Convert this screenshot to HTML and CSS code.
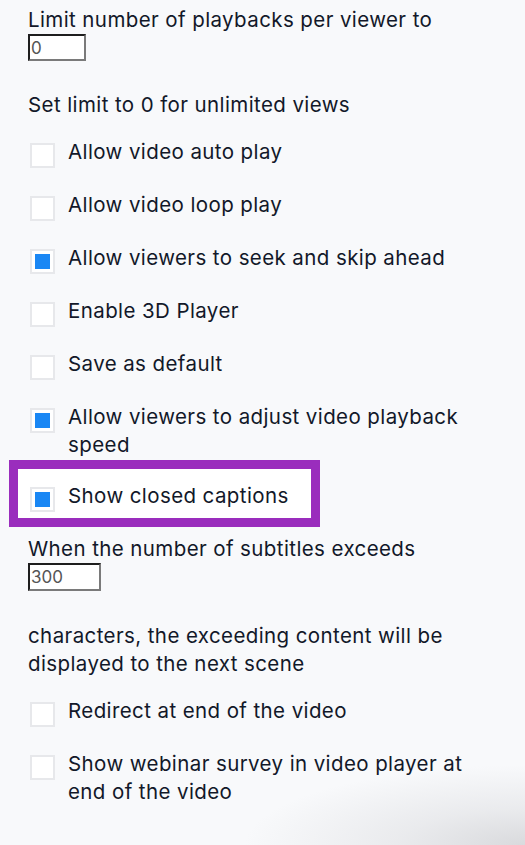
FILE: index.html
```html
<!DOCTYPE html>
<html lang="en">
<head>
  <meta charset="UTF-8">
  <meta name="viewport" content="width=device-width, initial-scale=1.0">
  <title>Player settings</title>
  <link rel="stylesheet" href="styles.css">
</head>
<body>
  <div class="settings">

    <div class="field">
      <label for="limit">Limit number of playbacks per viewer to</label>
      <input type="text" id="limit" class="num small" value="0">
    </div>
    <p class="note">Set limit to 0 for unlimited views</p>

    <div class="options">
      <label class="opt"><input type="checkbox"><span>Allow video auto play</span></label>
      <label class="opt"><input type="checkbox"><span>Allow video loop play</span></label>
      <label class="opt"><input type="checkbox" checked><span>Allow viewers to seek and skip ahead</span></label>
      <label class="opt"><input type="checkbox"><span>Enable 3D Player</span></label>
      <label class="opt"><input type="checkbox"><span>Save as default</span></label>
      <label class="opt"><input type="checkbox" checked><span>Allow viewers to adjust video playback speed</span></label>
      <label class="opt highlight"><input type="checkbox" checked><span>Show closed captions</span></label>
    </div>

    <div class="field after-opts">
      <label for="subs">When the number of subtitles exceeds</label>
      <input type="text" id="subs" class="num wide" value="300">
    </div>
    <p class="note">characters, the exceeding content will be displayed to the next scene</p>

    <div class="options">
      <label class="opt"><input type="checkbox"><span>Redirect at end of the video</span></label>
      <label class="opt"><input type="checkbox"><span>Show webinar survey in video player at end of the video</span></label>
    </div>

  </div>
</body>
</html>
```

FILE: styles.css
```css
html, body {
  height: 100%;
}

body {
  margin: 0;
  font-family: Inter, "Noto Sans", sans-serif;
  font-size: 20.5px;
  letter-spacing: 0.4px;
  line-height: 28px;
  color: #121829;
  background:
    radial-gradient(ellipse 280px 80px at 100% 100%, #d9dadd 0%, rgba(222,223,226,0.55) 45%, rgba(248,249,251,0) 100%),
    #f8f9fb;
  overflow: hidden;
}

.settings {
  padding: 6px 60px 0 28px;
}

.field label {
  display: block;
}

.num {
  display: block;
  box-sizing: border-box;
  margin: 0;
  padding: 0 1px;
  font-family: Inter, "Noto Sans", sans-serif;
  font-size: 17px;
  letter-spacing: 0;
  color: #555;
  background: #fff;
  border: 2px solid;
  border-color: #1e1e1e #7a7a7a #7a7a7a #1e1e1e;
  outline: none;
}

.num.small {
  width: 58px;
  height: 27px;
}

.num.wide {
  width: 73px;
  height: 28px;
}

.note {
  margin: 30px 0 0;
}

.options {
  margin-top: 19px;
  display: flex;
  flex-direction: column;
  gap: 23px;
}

.opt {
  display: flex;
  align-items: flex-start;
  gap: 13px;
  padding-left: 2px;
  position: relative;
}

.opt input {
  appearance: none;
  -webkit-appearance: none;
  flex: none;
  width: 25px;
  height: 25px;
  margin: 5px 0 0;
  box-sizing: border-box;
  background: #fff;
  border: 2px solid #e7e8eb;
  box-shadow: inset 0 0 0 3px #fff;
}

.opt input:checked {
  background: #1a87f4;
}

.opt span {
  position: relative;
}

/* annotation frame around the captions option */
.highlight::before {
  content: "";
  position: absolute;
  left: -19px;
  top: -22px;
  width: 311px;
  height: 67px;
  box-sizing: border-box;
  border: 9px solid #9a2dbd;
  background: #fff;
}

.highlight input {
  position: relative;
}

.after-opts {
  margin-top: 23px;
}

.after-opts + .note {
  margin-top: 31px;
}
```
